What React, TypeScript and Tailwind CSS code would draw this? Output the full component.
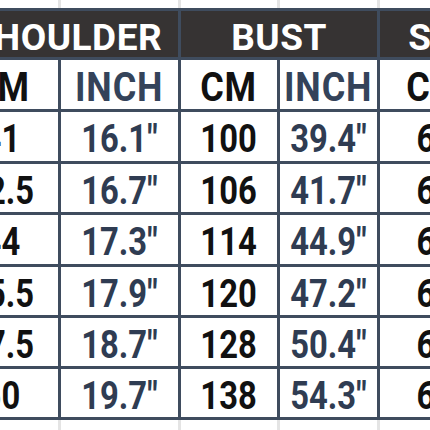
const font = { fontFamily: 'Roboto, "Liberation Sans", sans-serif' };

const rows = [
  ['41', '16.1"', '100', '39.4"', '61'],
  ['42.5', '16.7"', '106', '41.7"', '62'],
  ['44', '17.3"', '114', '44.9"', '63'],
  ['45.5', '17.9"', '120', '47.2"', '64'],
  ['47.5', '18.7"', '128', '50.4"', '65'],
  ['50', '19.7"', '138', '54.3"', '66'],
];

const heights = ['h-[49px]', 'h-[48px]', 'h-[49px]', 'h-[48px]', 'h-[48px]', 'h-[48px]'];

const cols = 'grid-cols-[113px_117px_96px_97px_110px_76px]';

function Strip({ h }: { h: string }) {
  return (
    <div className={`grid ${cols} gap-x-[3px] bg-[#e4e4e4] w-max`}>
      {[0, 1, 2, 3, 4, 5].map((i) => (
        <div key={i} className={`${h} bg-white`} />
      ))}
    </div>
  );
}

function Head({ children, extra = '' }: { children: string; extra?: string }) {
  return (
    <div className={`col-span-2 h-[46px] bg-[#363333] text-white font-bold text-[37px] leading-none flex items-center justify-center pt-[6px] ${extra}`}>
      <span className="inline-block tracking-[0.5px] whitespace-nowrap">{children}</span>
    </div>
  );
}

export default function App() {
  return (
    <div className="w-[430px] h-[430px] overflow-hidden bg-white" style={font}>
      <div className="ml-[-55px] w-max">
        <Strip h="h-[8px]" />
        <div className={`grid ${cols} gap-[3px] py-[3px] bg-[#3f4c5e] w-max`}>
          <Head extra="pl-[10px]">SHOULDER</Head>
          <Head>BUST</Head>
          <Head>SLEEVE</Head>
          {['CM', 'INCH', 'CM', 'INCH', 'CM', 'INCH'].map((t, i) => (
            <div
              key={i}
              className={`h-[49px] bg-white text-[40px] font-bold leading-none flex items-center justify-center pt-[6px] ${
                t === 'CM' ? 'text-[#111111]' : 'text-[#34435a]'
              }`}
            >
              <span className="inline-block scale-x-[0.9] tracking-[1px]">{t}</span>
            </div>
          ))}
          {rows.map((r, ri) =>
            [...r, ''].map((v, ci) => (
              <div
                key={`${ri}-${ci}`}
                className={`${heights[ri]} bg-white text-[39px] font-bold leading-none flex items-center justify-center pt-[6px] ${
                  ci % 2 === 0 ? 'text-[#111111]' : 'text-[#2f3c52]'
                }`}
              >
                <span className="inline-block scale-x-[0.84] whitespace-nowrap">{v}</span>
              </div>
            ))
          )}
        </div>
        <Strip h="h-[10px]" />
      </div>
    </div>
  );
}
